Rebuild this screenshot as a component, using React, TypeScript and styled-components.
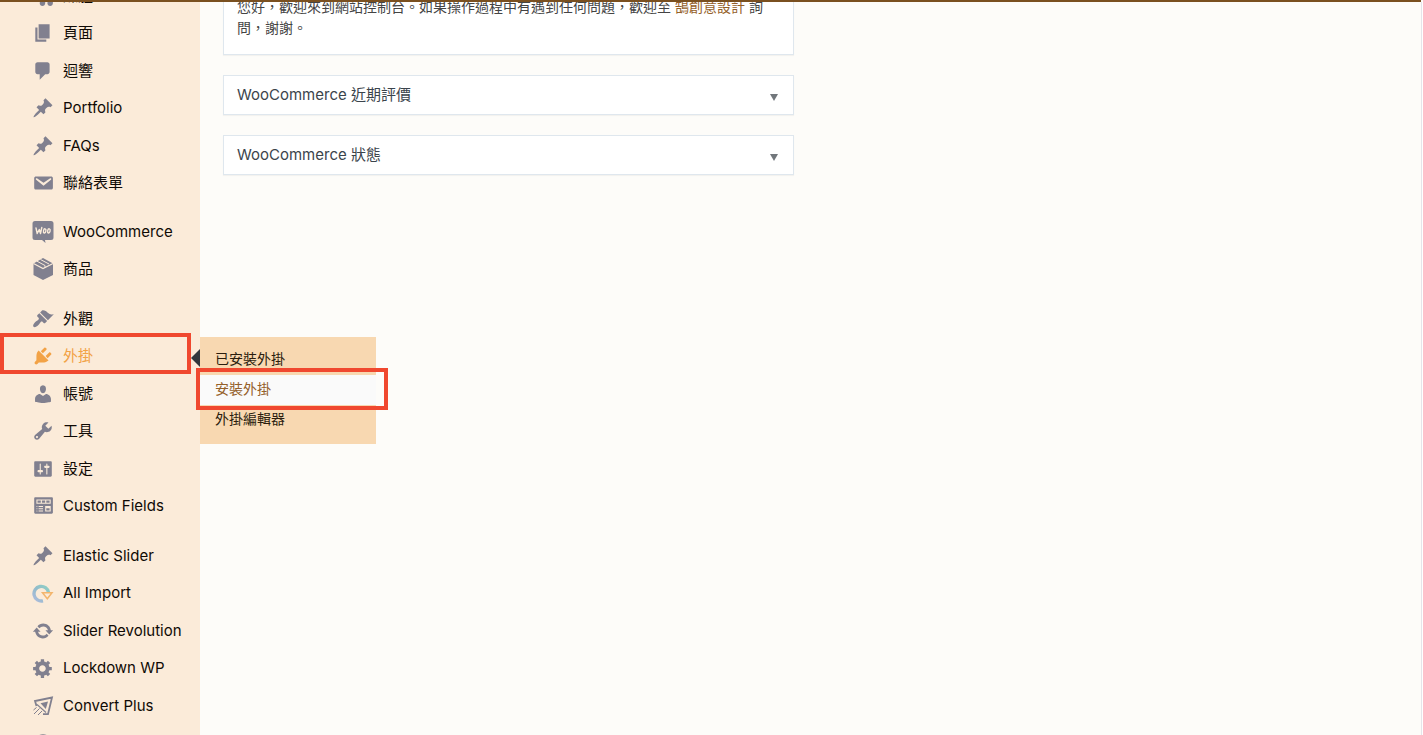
import React from "react";
import styled, { createGlobalStyle, css } from "styled-components";

const colors = {
  sidebar: "#fbebd9",
  submenu: "#f8d8b1",
  page: "#fdfcf9",
  bar: "#7a5020",
  icon: "#81808f",
  accent: "#f2a246",
  link: "#94602a",
  mark: "#f0482f",
  text: "#444444",
  heading: "#3b444c",
  border: "#dfe7ee",
};

const GlobalStyle = createGlobalStyle`
  *, *::before, *::after { box-sizing: border-box; }
  body {
    margin: 0;
    background: ${colors.page};
    font-family: Inter, "Noto Sans CJK TC", sans-serif;
    color: ${colors.text};
  }
  h2, p, ul { margin: 0; padding: 0; }
  ul { list-style: none; }
`;

const Page = styled.div`
  display: flex;
  flex-direction: column;
  height: 100vh;
  overflow: hidden;
`;

const TopBar = styled.header`
  flex: none;
  height: 2px;
  margin-right: 2px;
  background: ${colors.bar};
`;

const Body = styled.div`
  display: flex;
  flex: 1;
  min-height: 0;
  overflow: hidden;
`;

const Sidebar = styled.nav`
  flex: none;
  width: 200px;
  background: ${colors.sidebar};
`;

const Group = styled.ul`
  margin-bottom: 13px;

  &:first-child {
    margin: -25px 0 12px;
  }
`;

const Item = styled.li`
  position: relative;

  &:nth-child(even) {
    margin-bottom: 1px;
  }
`;

const ItemLink = styled.a<{ $active?: boolean }>`
  display: flex;
  align-items: center;
  gap: 9px;
  height: 37px;
  padding-left: 32px;
  font-size: 15px;
  line-height: 20px;
  color: ${(p) => (p.$active ? colors.accent : "#0f0a05")};
  text-decoration: none;
  white-space: nowrap;

  svg {
    flex: none;
    width: 22px;
    height: 22px;
    fill: ${(p) => (p.$active ? colors.accent : colors.icon)};
  }
`;

const highlight = css`
  content: "";
  position: absolute;
  border: 4px solid ${colors.mark};
  pointer-events: none;
`;

const ActiveItem = styled(Item)`
  &::before {
    content: "";
    position: absolute;
    right: 0;
    top: 12px;
    border: 9px solid transparent;
    border-left: 0;
    border-right-color: #32373c;
  }

  &::after {
    ${highlight}
    inset: -4px 9px 0 0;
  }
`;

const Submenu = styled.ul`
  position: absolute;
  z-index: 2;
  left: 100%;
  top: 0;
  width: 176px;
  padding: 8px 0 9px;
  background: ${colors.submenu};
`;

const SubItem = styled.li<{ $current?: boolean }>`
  position: relative;
  background: ${(p) => (p.$current ? "#fafafa" : "transparent")};

  &::after {
    ${(p) => p.$current && highlight}
    inset: -7px -12px -5px -4px;
    z-index: 1;
  }
`;

const SubLink = styled.a<{ $current?: boolean }>`
  display: block;
  padding: 4px 15px 6px;
  font-size: 14px;
  line-height: 20px;
  color: ${(p) => (p.$current ? colors.link : "#2b1d0e")};
  text-decoration: none;
`;

const Main = styled.main`
  flex: 1;
  display: grid;
  grid-template-columns: 1fr 1fr;
  column-gap: 36px;
  align-items: start;
  padding: 0 20px 0 23px;
`;

const Column = styled.div`
  display: flex;
  flex-direction: column;
  gap: 20px;
`;

const Card = styled.section`
  background: #ffffff;
  border: 1px solid ${colors.border};
  box-shadow: 0 1px 1px rgba(0, 0, 0, 0.04);
`;

const Notice = styled(Card)`
  margin-top: -8px;
  padding: 1px 13px 16px;
  font-size: 14px;
  line-height: 21px;

  a {
    color: ${colors.link};
    text-decoration: none;
  }
`;

const CardHeader = styled.div`
  display: flex;
  align-items: center;
  justify-content: space-between;
  padding: 9px 14px 9px 13px;
`;

const CardTitle = styled.h2`
  font-size: 15px;
  font-weight: 400;
  line-height: 20px;
  color: ${colors.heading};
`;

const Toggle = styled.button`
  display: flex;
  padding: 4px 0 0;
  border: 0;
  background: none;

  svg {
    width: 10px;
    height: 8px;
    fill: #72777c;
  }
`;

const Edge = styled.div`
  flex: none;
  width: 2px;
  border-left: 1px solid #e6e4ea;
  background: #ffffff;
`;

const paths = {
  media:
    "M13 11V4c0-.55-.45-1-1-1h-1.670L9 1H5L3.670 3H2c-.55 0-1 .45-1 1v7c0 .55.45 1 1 1h10c.55 0 1-.45 1-1zM14 6h5v10.500c0 1.380-1.120 2.500-2.500 2.500S14 17.880 14 16.500s1.120-2.500 2.500-2.500c.170 0 .340.020.500.050V9h-3V6zm-4 8.050V13h2v3.500c0 1.380-1.120 2.500-2.500 2.500S7 17.880 7 16.500 8.120 14 9.500 14c.170 0 .340.020.500.050z",
  page: "M6 15V2h10v13H6zm-1 1h8v2H3V5h2v11z",
  comment:
    "M5 2h9c1.1 0 2 .9 2 2v7c0 1.1-.9 2-2 2h-2l-5 5v-5H5c-1.1 0-2-.9-2-2V4c0-1.1.9-2 2-2z",
  pin: "M10.44 3.02l1.82-1.82 6.36 6.35-1.83 1.82c-1.05-.68-2.48-.57-3.41.36l-.75.75c-.92.93-1.04 2.35-.35 3.41l-1.83 1.82-2.41-2.41-2.8 2.79c-.42.42-3.38 2.71-3.8 2.29s1.86-3.39 2.28-3.81l2.79-2.79L4.1 9.36l1.83-1.82c1.05.69 2.48.57 3.4-.36l.75-.75c.93-.92 1.05-2.35.36-3.41z",
  email:
    "M3.87 4h13.25C18.37 4 19 4.59 19 5.79v8.42c0 1.19-.63 1.79-1.88 1.79H3.87c-1.25 0-1.88-.6-1.88-1.79V5.79c0-1.2.63-1.79 1.88-1.79zm6.62 8.6l6.74-5.53c.24-.2.43-.66.13-1.07-.29-.41-.82-.42-1.17-.17l-5.7 3.86L4.8 5.83c-.35-.25-.88-.24-1.17.17-.3.41-.11.87.13 1.07z",
  brush:
    "M14.48 11.06L7.41 3.99l1.5-1.5c.5-.56 2.3-.47 3.51.32 1.21.8 1.43 1.28 2.91 2.1 1.18.64 2.45 1.26 4.45.85zm-.71.71L6.7 4.7 4.93 6.47c-.39.39-.39 1.02 0 1.41l1.06 1.06c.39.39.39 1.03 0 1.42-.6.6-1.43 1.11-2.21 1.69-.35.26-.7.53-1.01.84C1.43 14.23.4 16.08 1.4 17.07c.99 1 2.84-.03 4.18-1.36.31-.31.58-.66.85-1.02.57-.78 1.08-1.61 1.69-2.21.39-.39 1.02-.39 1.41 0l1.06 1.06c.39.39 1.02.39 1.41 0z",
  plug: "M13.11 4.36L9.87 7.6 8 5.73l3.24-3.24c.35-.34 1.05-.2 1.56.32.52.51.66 1.21.31 1.55zm-8 1.77l.91-1.12 9.01 9.01-1.19.84c-.71.71-2.63 1.16-3.82 1.16H6.14L4.9 17.26c-.59.59-1.54.59-2.12 0-.59-.58-.59-1.53 0-2.12l1.24-1.24v-3.88c0-1.13.4-3.19 1.09-3.89zm7.26 3.97l3.24-3.24c.34-.35 1.04-.21 1.55.31.52.51.66 1.21.31 1.55l-3.24 3.25z",
  user: "M10 9.25c-2.27 0-2.73-3.44-2.73-3.44C7 4.02 7.82 2 9.97 2c2.16 0 2.98 2.02 2.71 3.81 0 0-.41 3.44-2.68 3.44zm0 2.57L12.72 10c2.39 0 4.52 2.33 4.52 4.53v2.49s-3.65 1.13-7.24 1.13c-3.65 0-7.24-1.13-7.24-1.13v-2.49c0-2.25 1.94-4.48 4.47-4.48z",
  wrench:
    "M16.68 9.77c-1.34 1.34-3.3 1.67-4.95.99l-5.41 6.52c-.99.99-2.59.99-3.58 0s-.99-2.59 0-3.57l6.52-5.42c-.68-1.65-.35-3.61.99-4.95 1.28-1.28 3.12-1.62 4.72-1.06l-2.89 2.89 2.82 2.82 2.86-2.87c.53 1.58.18 3.39-1.08 4.65zM3.81 16.21c.4.39 1.04.39 1.43 0 .4-.4.4-1.04 0-1.43-.39-.4-1.03-.4-1.43 0-.39.39-.39 1.03 0 1.43z",
  sliders:
    "M18 16V4c0-.55-.45-1-1-1H3c-.55 0-1 .45-1 1v12c0 .55.45 1 1 1h14c.55 0 1-.45 1-1zM8 11h1c.55 0 1 .45 1 1s-.45 1-1 1H8v1.5c0 .28-.22.5-.5.5s-.5-.22-.5-.5V13H6c-.55 0-1-.45-1-1s.45-1 1-1h1V5.5c0-.28.22-.5.5-.5s.5.22.5.5V11zm5-2h-1c-.55 0-1-.45-1-1s.45-1 1-1h1V5.5c0-.28.22-.5.5-.5s.5.22.5.5V7h1c.55 0 1 .45 1 1s-.45 1-1 1h-1v5.5c0 .28-.22.5-.5.5s-.5-.22-.5-.5V9z",
  fields:
    "M19 16V3c0-.55-.45-1-1-1H3c-.55 0-1 .45-1 1v13c0 .55.45 1 1 1h15c.55 0 1-.45 1-1zM4 4h13v4H4V4zm1 1v2h3V5H5zm4 0v2h3V5H9zm4 0v2h3V5h-3zm-8.5 5c.28 0 .5.22.5.5s-.22.5-.5.5-.5-.22-.5-.5.22-.5.5-.5zM6 10h4v1H6v-1zm6 0h5v5h-5v-5zm-7.5 2c.28 0 .5.22.5.5s-.22.5-.5.5-.5-.22-.5-.5.22-.5.5-.5zM6 12h4v1H6v-1zm7 0v2h3v-2h-3zm-8.5 2c.28 0 .5.22.5.5s-.22.5-.5.5-.5-.22-.5-.5.22-.5.5-.5zM6 14h4v1H6v-1z",
  update:
    "M10.2 3.28c3.53 0 6.43 2.61 6.92 6h2.08l-3.5 4-3.5-4h2.32c-.45-1.97-2.21-3.45-4.32-3.45-1.45 0-2.73.71-3.54 1.78L4.95 5.66C6.23 4.2 8.11 3.28 10.2 3.28zm-.4 13.44c-3.52 0-6.43-2.61-6.92-6H.8l3.5-4c1.17 1.33 2.33 2.67 3.5 4H5.48c.45 1.97 2.21 3.45 4.32 3.45 1.45 0 2.73-.71 3.54-1.78l1.71 1.95c-1.28 1.46-3.15 2.38-5.25 2.38z",
  gear: "M18 12h-2.18c-.17.7-.44 1.35-.81 1.93l1.54 1.54-2.1 2.1-1.54-1.54c-.58.36-1.23.63-1.91.79V19H8v-2.18c-.68-.16-1.33-.43-1.91-.79l-1.54 1.54-2.12-2.12 1.54-1.54c-.36-.58-.63-1.23-.79-1.91H1V9.03h2.17c.16-.7.44-1.35.8-1.94L2.43 5.55l2.1-2.1 1.54 1.54c.58-.37 1.24-.64 1.93-.81V2h3v2.18c.68.16 1.33.43 1.91.79l1.54-1.54 2.12 2.12-1.54 1.54c.36.59.64 1.24.8 1.94H18V12zm-8.5 1.5c1.66 0 3-1.34 3-3s-1.34-3-3-3-3 1.34-3 3 1.34 3 3 3z",
  collapse:
    "M10 2c4.420 0 8 3.580 8 8s-3.580 8-8 8-8-3.580-8-8 3.580-8 8-8zm2 12V6l-5 4z",
};

type PathName = keyof typeof paths;

const Glyph = ({ name }: { name: PathName }) => (
  <svg viewBox="0 0 20 20" aria-hidden="true">
    <path d={paths[name]} />
  </svg>
);

const WooIcon = () => (
  <svg viewBox="0 0 22 22" aria-hidden="true">
    <path d="M3 0h16a2.500 2.500 0 0 1 2.500 2.500v14A2.500 2.500 0 0 1 19 19h-6l.5 3-3.500-3H3A2.500 2.500 0 0 1 .5 16.500v-14A2.500 2.500 0 0 1 3 0z" />
    <g fill="none" stroke={colors.sidebar} strokeWidth="1.400" strokeLinecap="round" strokeLinejoin="round">
      <path d="M4 7l1.200 5.500L7.300 8.500l1.200 4L9.800 6.500" />
      <ellipse cx="12.700" cy="9.900" rx="1.200" ry="2.100" transform="rotate(12 12.700 9.900)" />
      <ellipse cx="16.900" cy="9.900" rx="1.200" ry="2.100" transform="rotate(12 16.900 9.900)" />
    </g>
  </svg>
);

const BoxIcon = () => (
  <svg viewBox="0 0 22 22" aria-hidden="true">
    <path d="M11 0l10 5.500V17l-10 5-9.500-5V5.500z" />
    <g fill="none" stroke={colors.sidebar}>
      <path d="M1.500 5.500L11 10.500l10-5" strokeWidth="1.200" />
      <path d="M5 3.200l8 4.300v2.200M8.500 1.500l8.500 4.500" strokeWidth="1" />
    </g>
  </svg>
);

const ImportIcon = () => (
  <svg viewBox="0 0 22 22" aria-hidden="true">
    <defs>
      <linearGradient id="import-ring" x1="0" y1="1" x2="1" y2="0">
        <stop offset="0" stopColor="#aebbdc" />
        <stop offset="0.500" stopColor="#93bccb" />
        <stop offset="1" stopColor="#8fd0c4" />
      </linearGradient>
    </defs>
    <path d="M11 18.800a7.300 7.300 0 1 1 5.500-8.300" fill="none" stroke="url(#import-ring)" strokeWidth="3.400" />
    <path d="M10.500 10.800h9.500l-4.700 6z" fill="none" stroke="#f3b56c" strokeWidth="1.500" />
  </svg>
);

const ConvertIcon = () => (
  <svg viewBox="0 0 22 22" aria-hidden="true">
    <g fill="none" stroke={colors.icon}>
      <path d="M4.500 11L3 6l17-3.500L16 19.200h-5" strokeWidth="1.800" />
      <path d="M5 9.500l9 8" strokeWidth="1.200" />
      <path d="M1.500 15l3-2.500M2 19l5.500-5.500M6 20l4-4" strokeWidth="1" />
    </g>
    <path d="M8.500 8.300l7.500-1.800-2.200 7.500z" />
  </svg>
);

interface Entry {
  label: string;
  icon: React.ReactNode;
  children?: string[];
}

const item = (label: string, name: PathName): Entry => ({ label, icon: <Glyph name={name} /> });

const menu: Entry[][] = [
  [
    item("媒體", "media"),
    item("頁面", "page"),
    item("迴響", "comment"),
    item("Portfolio", "pin"),
    item("FAQs", "pin"),
    item("聯絡表單", "email"),
  ],
  [
    { label: "WooCommerce", icon: <WooIcon /> },
    { label: "商品", icon: <BoxIcon /> },
  ],
  [
    item("外觀", "brush"),
    { ...item("外掛", "plug"), children: ["已安裝外掛", "安裝外掛", "外掛編輯器"] },
    item("帳號", "user"),
    item("工具", "wrench"),
    item("設定", "sliders"),
    item("Custom Fields", "fields"),
  ],
  [
    item("Elastic Slider", "pin"),
    { label: "All Import", icon: <ImportIcon /> },
    item("Slider Revolution", "update"),
    item("Lockdown WP", "gear"),
    { label: "Convert Plus", icon: <ConvertIcon /> },
    item("", "collapse"),
  ],
];

const MenuEntry = ({ entry }: { entry: Entry }) => {
  if (!entry.children) {
    return (
      <Item>
        <ItemLink href="#">
          {entry.icon}
          {entry.label}
        </ItemLink>
      </Item>
    );
  }
  return (
    <ActiveItem>
      <ItemLink href="#" $active>
        {entry.icon}
        {entry.label}
      </ItemLink>
      <Submenu>
        {entry.children.map((label, i) => (
          <SubItem key={label} $current={i === 1}>
            <SubLink href="#" $current={i === 1}>
              {label}
            </SubLink>
          </SubItem>
        ))}
      </Submenu>
    </ActiveItem>
  );
};

const CollapsedCard = ({ title }: { title: string }) => (
  <Card>
    <CardHeader>
      <CardTitle>{title}</CardTitle>
      <Toggle type="button" aria-label={title} aria-expanded={false}>
        <svg viewBox="0 0 10 8" aria-hidden="true">
          <path d="M1 1h8L5 8z" />
        </svg>
      </Toggle>
    </CardHeader>
  </Card>
);

export default function App() {
  return (
    <>
      <GlobalStyle />
      <Page>
        <TopBar />
        <Body>
          <Sidebar>
            {menu.map((group, i) => (
              <Group key={i}>
                {group.map((entry) => (
                  <MenuEntry key={entry.label} entry={entry} />
                ))}
              </Group>
            ))}
          </Sidebar>
          <Main>
            <Column>
              <Notice>
                <p>
                  您好，歡迎來到網站控制台。如果操作過程中有遇到任何問題，歡迎至{" "}
                  <a href="#">鵠創意設計</a> 詢問，謝謝。
                </p>
              </Notice>
              <CollapsedCard title="WooCommerce 近期評價" />
              <CollapsedCard title="WooCommerce 狀態" />
            </Column>
          </Main>
          <Edge />
        </Body>
      </Page>
    </>
  );
}
